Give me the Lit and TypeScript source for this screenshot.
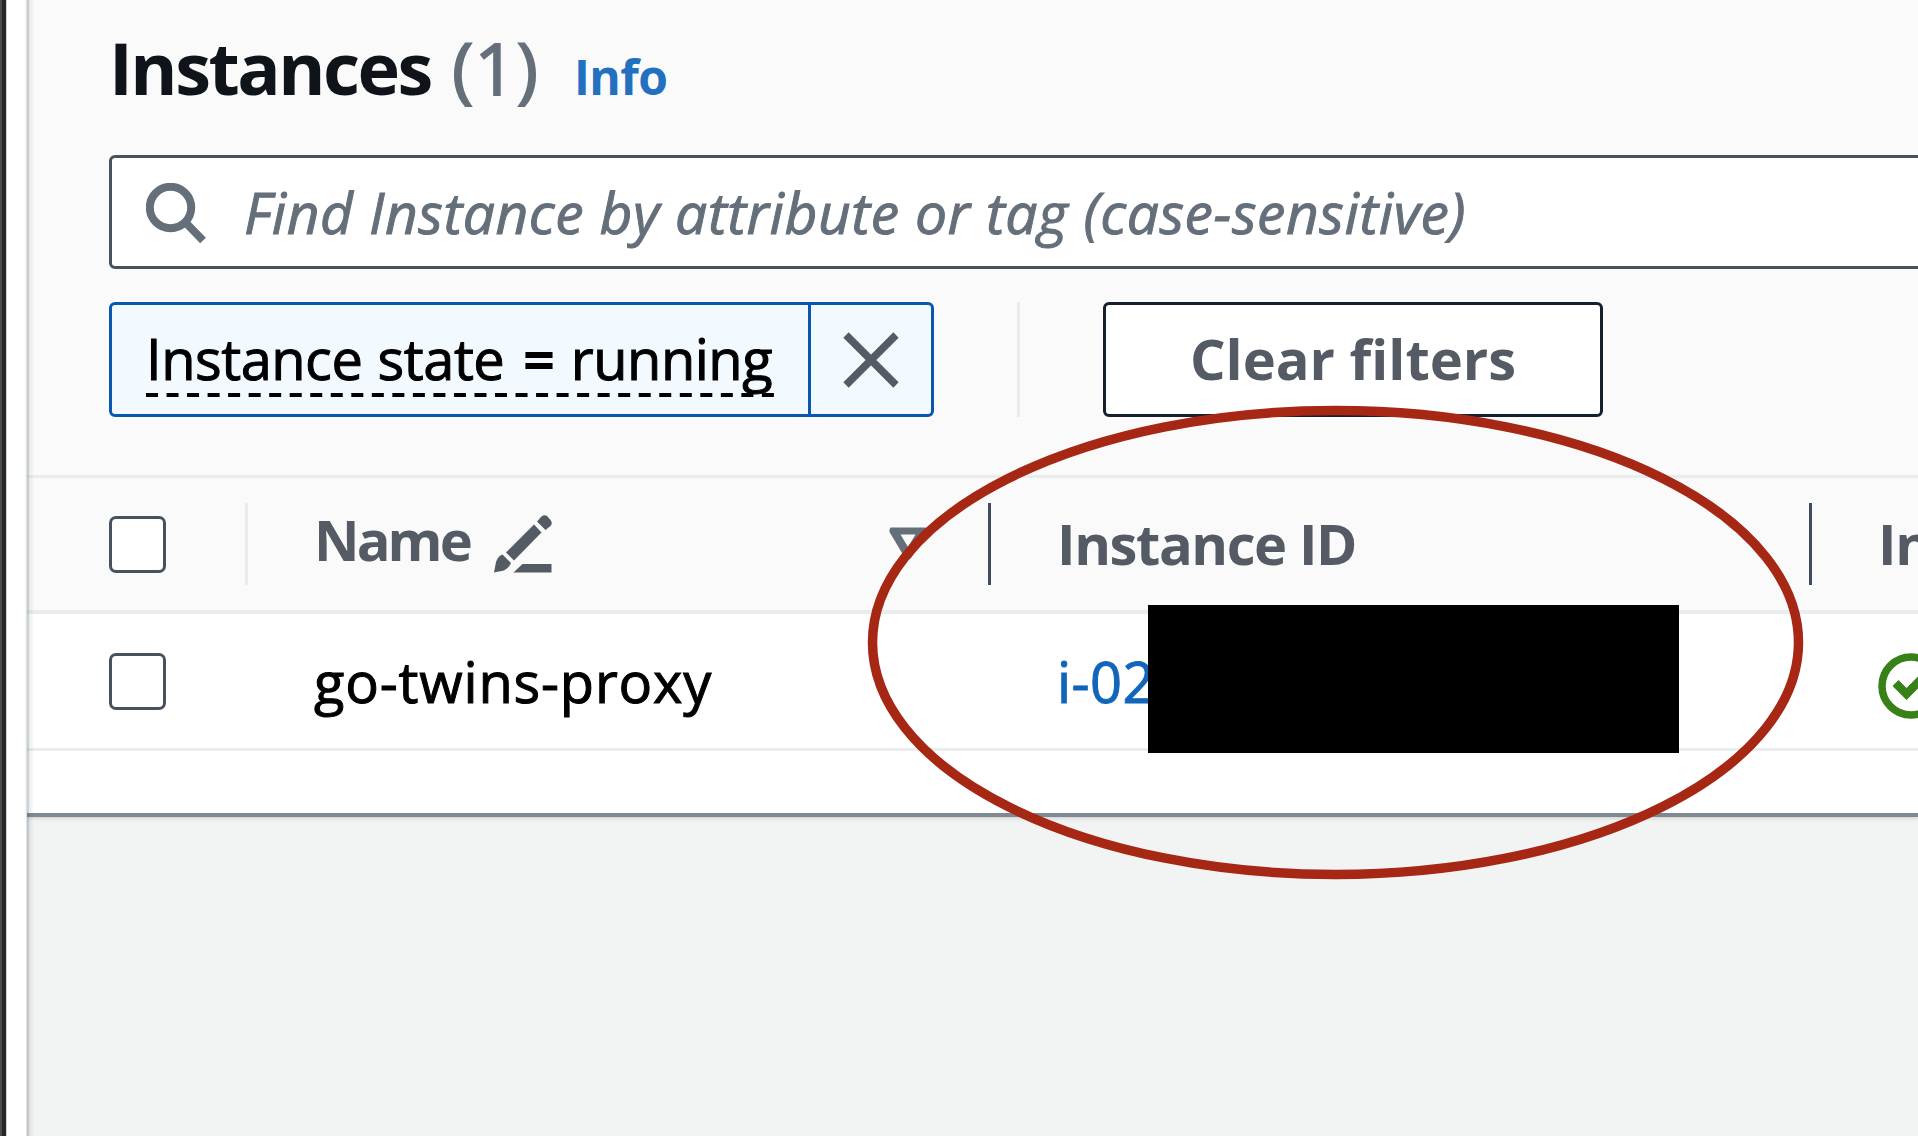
import { LitElement, html, css, svg } from "lit";
import { customElement } from "lit/decorators.js";

@customElement("app-root")
export class AppRoot extends LitElement {
  static styles = css`
    :host {
      display: block;
      width: 1918px;
      height: 1136px;
      overflow: hidden;
      position: relative;
      background: #f2f3f3;
      font-family: "Open Sans", "Noto Sans", sans-serif;
      color: #0f141a;
    }
    * { box-sizing: border-box; }
    .shell { display: flex; height: 1136px; }
    .edge {
      flex: none;
      width: 7px;
      background: linear-gradient(90deg, #4d4d4d 0 2px, #282828 2px 6px, #d2d2cf 6px 7px);
    }
    .gutter { flex: none; width: 20px; background: #fff; }
    .main { flex: none; width: 1891px; height: 1136px; background: #f2f3f3; }
    .card {
      height: 817px;
      background: #fff;
      border-bottom: 4px solid #808890;
      box-shadow: 0 2px 3px #d5d9da;
    }
    .shade {
      position: absolute; left: 26px; top: 0; width: 8px; height: 1136px;
      background: linear-gradient(90deg, #dfe1e3 0 1px, rgba(70, 85, 100, 0.27) 1px 3px, rgba(70, 85, 100, 0.12) 3px, rgba(70, 85, 100, 0));
    }
    .top { height: 475px; background: #fafafa; padding: 31px 0 0 82px; }
    .title { display: flex; align-items: baseline; height: 72px; line-height: 72px; white-space: pre; }
    .title b { font-size: 72px; font-weight: 700; width: 343px; letter-spacing: -2.5px; }
    .count { font-size: 72px; color: #656f7a; width: 122px; letter-spacing: 1.2px; -webkit-text-stroke: 1.8px #656f7a; }
    .info { font-size: 48px; font-weight: 700; color: #2270bf; letter-spacing: -0.6px; }
    .search {
      margin-top: 52px;
      height: 114px;
      width: 1900px;
      border: 3px solid #46535f;
      border-radius: 6px;
      background: #fff;
      display: flex;
      align-items: center;
      padding-left: 34px;
    }
    .search svg { flex: none; margin-right: 38px; margin-top: 2px; }
    .placeholder { font-size: 57px; font-style: italic; color: #656f7a; line-height: 108px; white-space: nowrap; letter-spacing: 0.54px; -webkit-text-stroke: 1px #656f7a; }
    .filters { display: flex; margin-top: 33px; height: 115px; }
    .token { display: flex; width: 825px; border: 3px solid #0a57b0; border-radius: 6px; background: #f2faff; }
    .tokentext { width: 696px; padding: 16px 0 0 34px; }
    .words { display: block; width: 628px; height: 72px; line-height: 74px; font-size: 56px; color: #000; white-space: nowrap; letter-spacing: -0.5px; word-spacing: 1.2px; -webkit-text-stroke: 1px #000; }
    .words b { margin: 0 1px 0 3.5px; -webkit-text-stroke: 0; }
    .dash { display: block; }
    .close { flex: 1; border-left: 3px solid #0a57b0; display: flex; align-items: center; justify-content: center; }
    .sep { width: 3px; margin: 0 83px; background: #e9ebed; }
    .clear {
      width: 500px; border: 3px solid #16202d; border-radius: 6px; background: #fff;
      font-size: 56px; font-weight: 700; color: #545b64; text-align: center; line-height: 107px; white-space: nowrap;
    }
    .row { display: grid; grid-template-columns: 221px 743px 821px 1fr; width: 1891px; }
    .head { height: 139px; border-top: 3px solid #eaeded; border-bottom: 4px solid #eaeded; background: #fafafa; align-items: center; font-size: 56px; font-weight: 700; color: #545b64; }
    .body { height: 137px; border-bottom: 3px solid #eaeded; align-items: center; font-size: 56px; color: #000; }
    .cell { display: flex; align-items: center; height: 82px; white-space: nowrap; }
    .head .cell { border-right: 3px solid #414d5c; }
    .head .cell.first { border-color: #eaeded; }
    .head .cell.last { border: 0; overflow: hidden; }
    .pick { padding-left: 82px; }
    .box { width: 57px; height: 57px; border: 3px solid #46535f; border-radius: 7px; background: #fff; margin-top: 1px; }
    .pad { padding-left: 66px; }
    .name { letter-spacing: -2.9px; padding-bottom: 10px; }
    .iid { letter-spacing: -1.4px; padding-bottom: 2px; }
    .go { letter-spacing: 0.8px; -webkit-text-stroke: 1px #000; }
    .pencil { margin-left: 24px; }
    .sort { margin-left: auto; margin-right: 61px; }
    .ok { margin-top: 10px; }
    .link { color: #1166bb; -webkit-text-stroke: 1px #1166bb; letter-spacing: 0.4px; }
    .redact { position: absolute; left: 1148px; top: 605px; width: 531px; height: 148px; background: #000; }
    .ring { position: absolute; left: 0; top: 0; }
  `;

  private search() {
    return svg`<svg width="60" height="61" viewBox="0 0 60 61" fill="none" stroke="#656f7a" stroke-width="8">
      <circle cx="24.5" cy="24.5" r="20.7"/><path d="M39 39 L57 57.5"/></svg>`;
  }

  render() {
    return html`
      <div class="shell">
        <div class="edge"></div>
        <div class="gutter"></div>
        <div class="main">
          <div class="card">
            <div class="top">
              <div class="title"><b>Instances</b><span class="count">(1)</span><span class="info">Info</span></div>
              <div class="search">${this.search()}<span class="placeholder">Find Instance by attribute or tag (case-sensitive)</span></div>
              <div class="filters">
                <div class="token">
                  <div class="tokentext">
                    <span class="words">Instance state <b>=</b> running</span>
                    <svg class="dash" width="628" height="4"><path d="M0 2H628" stroke="#000" stroke-width="4" stroke-dasharray="12 8.53"/></svg>
                  </div>
                  <div class="close">
                    <svg width="56" height="56" viewBox="0 0 56 56" stroke="#545b64" stroke-width="7.5"><path d="M3 3L53 53M53 3L3 53"/></svg>
                  </div>
                </div>
                <div class="sep"></div>
                <div class="clear">Clear filters</div>
              </div>
            </div>
            <div class="row head">
              <div class="cell first pick"><div class="box"></div></div>
              <div class="cell pad"><span class="name">Name</span>
                <svg class="pencil" width="58" height="58" viewBox="0 0 58 58" fill="#545b64">
                  <path d="M0 57.500 L2 47 Q4 41 8.500 39.500 L17 48 Q15 53 10 55.500 Z"/><path d="M12 37.500 L40 9.500 L47.500 17.500 L20 45.500 Z"/><path d="M43 6.500 L47.500 1.500 Q50.500 -1 53.500 1.500 L56.500 5 Q59 8 56.500 11 L51.500 15 Z"/><path d="M28.500 49H57.500V57.500H19.500Z"/>
                </svg>
                <svg class="sort" width="38" height="34" viewBox="0 0 38 34" fill="#656f7a"><path fill-rule="evenodd" d="M1.500 0.500H36.500Q38 2 37.500 5L22 31Q19 34 16 31L0.500 5Q0 2 1.500 0.500ZM11.500 7.500L19 20L26.500 7.500Z"/></svg>
              </div>
              <div class="cell pad"><span class="iid">Instance ID</span></div>
              <div class="cell last pad"><span class="iid">In</span></div>
            </div>
            <div class="row body">
              <div class="cell pick"><div class="box"></div></div>
              <div class="cell pad"><span class="go">go-twins-proxy</span></div>
              <div class="cell pad"><span class="link">i-02</span></div>
              <div class="cell pad"><svg class="ok" width="66" height="66" viewBox="0 0 66 66" fill="none" stroke="#388018" stroke-width="7.500"><circle cx="33" cy="33" r="29"/><path d="M17.500 30L28.500 41L48 21.500" stroke-width="8.500"/></svg></div>
            </div>
          </div>
        </div>
      </div>
      <div class="shade"></div>
      <div class="redact"></div>
      <svg class="ring" width="1918" height="1136"><ellipse cx="1335.500" cy="642.500" rx="463" ry="232" fill="none" stroke="#a52714" stroke-width="9.500"/></svg>
    `;
  }
}
